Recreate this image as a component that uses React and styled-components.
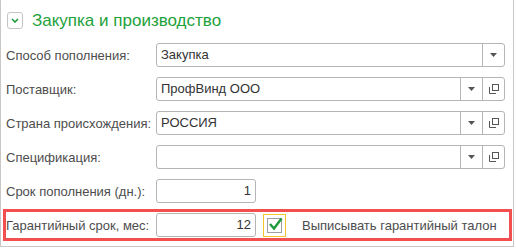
import React from "react";
import styled, { createGlobalStyle } from "styled-components";

const GlobalStyle = createGlobalStyle`
  html, body {
    margin: 0;
    padding: 0;
    background: #fff;
  }
  body {
    font-family: "Liberation Sans", Arial, sans-serif;
  }
`;

const rows = [
  { label: "Способ пополнения:", value: "Закупка", kind: "select" },
  { label: "Поставщик:", value: "ПрофВинд ООО", kind: "ref" },
  { label: "Страна происхождения:", value: "РОССИЯ", kind: "ref" },
  { label: "Спецификация:", value: "", kind: "ref" },
  { label: "Срок пополнения (дн.):", value: "1", kind: "number" },
];

const ArrowIcon = () => (
  <svg width="7" height="4" viewBox="0 0 7 4">
    <path d="M0 0 H7 L3.5 4 Z" fill="#555" />
  </svg>
);

const OpenIcon = () => (
  <svg width="12" height="12" viewBox="0 0 12 12">
    <rect x="4.5" y="1.5" width="6" height="6" fill="none" stroke="#555" />
    <path d="M1.5 4 V10.5 H8" fill="none" stroke="#555" />
  </svg>
);

const CheckIcon = () => (
  <svg width="15" height="14" viewBox="0 0 15 14">
    <path d="M2 7 L6 11.5 L13.5 1.5" fill="none" stroke="#1f9a3c" strokeWidth="2.4" />
  </svg>
);

const ChevronIcon = () => (
  <svg width="8" height="5" viewBox="0 0 8 5">
    <path d="M1 1 L4 4 L7 1" fill="none" stroke="#1e9e3a" strokeWidth="1.6" />
  </svg>
);

const App = () => {
  return (
    <>
      <GlobalStyle />
      <Frame>
        <Header>
          <CollapseButton>
            <ChevronIcon />
          </CollapseButton>
          <Title>Закупка и производство</Title>
        </Header>
        <Form>
          {rows.map((row) => (
            <Row key={row.label}>
              <Label>{row.label}</Label>
              <Field short={row.kind === "number"}>
                <Value numeric={row.kind === "number"}>{row.value}</Value>
                {row.kind !== "number" && (
                  <FieldButton>
                    <ArrowIcon />
                  </FieldButton>
                )}
                {row.kind === "ref" && (
                  <FieldButton>
                    <OpenIcon />
                  </FieldButton>
                )}
              </Field>
            </Row>
          ))}
          <Row highlighted>
            <Label>Гарантийный срок, мес:</Label>
            <Field short>
              <Value numeric>12</Value>
            </Field>
            <CheckFocus>
              <CheckBox>
                <CheckIcon />
              </CheckBox>
            </CheckFocus>
            <CheckLabel>Выписывать гарантийный талон</CheckLabel>
          </Row>
        </Form>
      </Frame>
    </>
  );
};

const Frame = styled.div`
  width: 512px;
  height: 246px;
  border-left: 1px solid #c8c8c8;
  border-right: 1px solid #c8c8c8;
  border-bottom: 1px solid #c8c8c8;
  box-sizing: content-box;
  overflow: hidden;
`;

const Header = styled.div`
  display: flex;
  align-items: center;
  gap: 9px;
  padding: 12px 0 0 6px;
  height: 17px;
`;

const CollapseButton = styled.div`
  width: 16px;
  height: 17px;
  box-sizing: border-box;
  border: 1px solid #c4c4c4;
  border-radius: 3px;
  display: flex;
  align-items: center;
  justify-content: center;
  background: #fff;
`;

const Title = styled.div`
  font-size: 17px;
  color: #21a13a;
  line-height: 17px;
`;

const Form = styled.div`
  display: flex;
  flex-direction: column;
  gap: 10px;
  padding: 14px 7px 0 5px;
`;

const Row = styled.div`
  display: flex;
  align-items: center;
  height: 24px;
  ${({ highlighted }) =>
    highlighted &&
    `
    height: 24px;
    margin: -4px -6px 0 -3px;
    padding: 1px 3px 1px 0;
    border: 3px solid #f25050;
  `}
`;

const Label = styled.div`
  width: 150px;
  flex: none;
  font-size: 13px;
  color: #4d4d4d;
  white-space: nowrap;
`;

const Field = styled.div`
  display: flex;
  height: 24px;
  box-sizing: border-box;
  width: ${({ short }) => (short ? "100px" : "349px")};
  border: 1px solid #b5b5b5;
  border-radius: 3px;
  background: #fff;
  overflow: hidden;
`;

const Value = styled.div`
  flex: 1;
  font-size: 13px;
  color: #333;
  line-height: 22px;
  padding: 0 4px;
  text-align: ${({ numeric }) => (numeric ? "right" : "left")};
  white-space: nowrap;
`;

const FieldButton = styled.div`
  width: 21px;
  flex: none;
  display: flex;
  align-items: center;
  justify-content: center;
  border-left: 1px solid #b5b5b5;
`;

const CheckFocus = styled.div`
  margin-left: 7px;
  width: 23px;
  height: 23px;
  box-sizing: border-box;
  border: 1px solid #f5c431;
  display: flex;
  align-items: center;
  justify-content: center;
`;

const CheckBox = styled.div`
  width: 15px;
  height: 15px;
  box-sizing: border-box;
  border: 1px solid #a0a0a0;
  position: relative;
  svg {
    position: absolute;
    left: 0;
    top: -2px;
  }
`;

const CheckLabel = styled.div`
  margin-left: 16px;
  font-size: 13px;
  color: #4d4d4d;
  white-space: nowrap;
`;

export default App;
